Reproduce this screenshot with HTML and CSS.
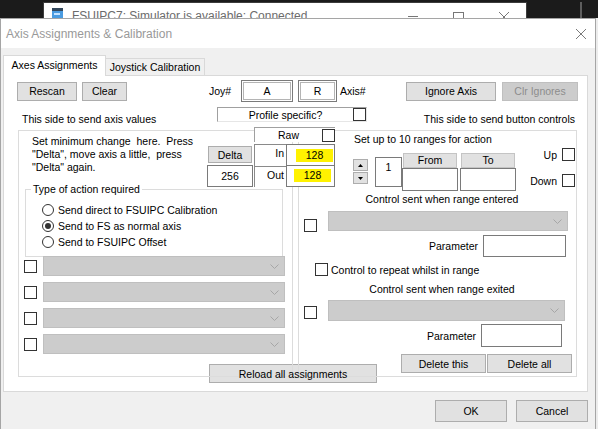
FILE: index.html
```html
<!DOCTYPE html>
<html lang="en">
<head>
    <meta charset="UTF-8">
    <title>Axis Assignments &amp; Calibration</title>
    <link rel="stylesheet" href="styles.css">
</head>
<body>
    <!-- window behind the dialog -->
    <div class="desktop">
        <div class="bg-window">
            <svg class="app-icon" width="11" height="10" viewBox="0 0 11 10">
                <rect x="0" y="0" width="11" height="3" fill="#33475b"/>
                <rect x="0" y="3" width="11" height="7" fill="#4a9be0"/>
                <rect x="2" y="5" width="6" height="2" fill="#c4e2ff"/>
            </svg>
            <span class="bg-title">FSUIPC7: Simulator is available: Connected</span>
            <svg class="bg-controls" width="110" height="14" viewBox="0 0 110 14">
                <line x1="5" y1="8.5" x2="15" y2="8.5" stroke="#777"/>
                <rect x="50.5" y="4.5" width="10" height="10" fill="none" stroke="#777"/>
                <path d="M96 4 L106 14 M106 4 L96 14" stroke="#777"/>
            </svg>
        </div>
        <div class="desktop-edge"></div>
    </div>

    <div class="dialog">
        <div class="titlebar">
            <span>Axis Assignments &amp; Calibration</span>
            <svg class="close" width="10" height="10" viewBox="0 0 10 10">
                <path d="M0 0 L10 10 M10 0 L0 10" stroke="#7a7a7a"/>
            </svg>
        </div>

        <div class="tabs">
            <div class="tab active">Axes Assignments</div>
            <div class="tab">Joystick Calibration</div>
        </div>

        <div class="panel">
            <div class="toolbar">
                <button class="btn rescan">Rescan</button>
                <button class="btn clear">Clear</button>
                <span class="joy-label">Joy#</span>
                <div class="id-box joy-box">A</div>
                <div class="id-box axis-box">R</div>
                <span class="axis-label">Axis#</span>
                <button class="btn ignore">Ignore Axis</button>
                <button class="btn disabled clr">Clr Ignores</button>
            </div>

            <div class="sides">
                <div class="side-note left">This side to send axis values</div>
                <div class="profile"><span>Profile specific?</span><span class="check"></span></div>
                <div class="side-note right">This side to send button controls</div>
            </div>

            <div class="groups">
                <!-- axis side -->
                <div class="group axis-side">
                    <div class="hint">Set minimum change  here.  Press
"Delta", move axis a little,  press
"Delta" again.</div>
                    <div class="action">
                        <div class="action-caption">Type of action required</div>
                        <div class="radios">
                            <div class="radio"><span class="dot"></span>Send direct to FSUIPC Calibration</div>
                            <div class="radio"><span class="dot on"></span>Send to FS as normal axis</div>
                            <div class="radio"><span class="dot"></span>Send to FSUIPC Offset</div>
                        </div>
                    </div>
                    <div class="assign-rows">
                        <div class="assign"><span class="check"></span><div class="combo"><svg width="9" height="5" viewBox="0 0 9 5"><path d="M0.5 0.5 L4.5 4.5 L8.5 0.5" fill="none" stroke="#a6a6a6"/></svg></div></div>
                        <div class="assign"><span class="check"></span><div class="combo"><svg width="9" height="5" viewBox="0 0 9 5"><path d="M0.5 0.5 L4.5 4.5 L8.5 0.5" fill="none" stroke="#a6a6a6"/></svg></div></div>
                        <div class="assign"><span class="check"></span><div class="combo"><svg width="9" height="5" viewBox="0 0 9 5"><path d="M0.5 0.5 L4.5 4.5 L8.5 0.5" fill="none" stroke="#a6a6a6"/></svg></div></div>
                        <div class="assign"><span class="check"></span><div class="combo"><svg width="9" height="5" viewBox="0 0 9 5"><path d="M0.5 0.5 L4.5 4.5 L8.5 0.5" fill="none" stroke="#a6a6a6"/></svg></div></div>
                    </div>
                </div>

                <!-- button side -->
                <div class="group button-side">
                    <div class="ranges-title">Set up to 10 ranges for action</div>
                    <div class="range-row">
                        <div class="spinner">
                            <div class="spin"><svg width="5" height="3" viewBox="0 0 5 3"><polygon points="0,3 2.5,0 5,3" fill="#000"/></svg></div>
                            <div class="spin"><svg width="5" height="3" viewBox="0 0 5 3"><polygon points="0,0 2.5,3 5,0" fill="#000"/></svg></div>
                        </div>
                        <div class="field range-index">1</div>
                        <div class="bound">
                            <div class="bound-head">From</div>
                            <div class="field bound-input"></div>
                        </div>
                        <div class="bound to">
                            <div class="bound-head">To</div>
                            <div class="field bound-input"></div>
                        </div>
                        <div class="direction">
                            <div class="dir">Up<span class="check"></span></div>
                            <div class="dir">Down<span class="check"></span></div>
                        </div>
                    </div>

                    <div class="range-caption">Control sent when range entered</div>
                    <div class="control-row">
                        <span class="check"></span>
                        <div class="combo"><svg width="9" height="5" viewBox="0 0 9 5"><path d="M0.5 0.5 L4.5 4.5 L8.5 0.5" fill="none" stroke="#a6a6a6"/></svg></div>
                    </div>
                    <div class="param">Parameter<div class="field"></div></div>
                    <div class="repeat"><span class="check"></span>Control to repeat whilst in range</div>

                    <div class="range-caption exit">Control sent when range exited</div>
                    <div class="control-row exit">
                        <span class="check"></span>
                        <div class="combo"><svg width="9" height="5" viewBox="0 0 9 5"><path d="M0.5 0.5 L4.5 4.5 L8.5 0.5" fill="none" stroke="#a6a6a6"/></svg></div>
                    </div>
                    <div class="param exit">Parameter<div class="field"></div></div>

                    <div class="delete-row">
                        <button class="btn">Delete this</button>
                        <button class="btn">Delete all</button>
                    </div>
                </div>
            </div>

            <button class="btn reload">Reload all assignments</button>

            <!-- delta / raw readings, sits across both group borders -->
            <div class="delta-cluster">
                <div class="delta-col">
                    <button class="btn delta">Delta</button>
                    <div class="field delta-value">256</div>
                </div>
                <div class="raw-col">
                    <div class="raw"><span>Raw</span><span class="check"></span></div>
                    <div class="readings">
                        <div class="io">In</div>
                        <div class="val"><span class="marker first">128</span></div>
                        <div class="io">Out</div>
                        <div class="val second"><span class="marker">128</span></div>
                    </div>
                </div>
            </div>
        </div>

        <div class="footer">
            <button class="btn">OK</button>
            <button class="btn">Cancel</button>
        </div>
    </div>
</body>
</html>
```

FILE: styles.css
```css
* {
    box-sizing: border-box;
}
body {
    margin: 0;
    width: 598px;
    height: 429px;
    overflow: hidden;
    background: #ececec;
    font-family: "Liberation Sans", Arial, sans-serif;
    font-size: 10.5px;
    color: #000;
}

/* background window */
.desktop {
    display: flex;
    height: 18px;
    padding-top: 2px;
    overflow: hidden;
    background: #1b1b1b;
}
.bg-window {
    display: flex;
    align-items: flex-start;
    flex: none;
    width: 484px;
    height: 30px;
    margin-left: 43px;
    padding: 5px 0 0 8px;
    background: #fff;
    border: 1px solid #3c3c3c;
}
.app-icon {
    flex: none;
}
.bg-title {
    margin: 1px 0 0 9px;
    font-size: 12px;
    line-height: 14px;
    color: #6b6b6b;
}
.bg-controls {
    margin-left: auto;
    margin-right: 13px;
}
.desktop-edge {
    width: 2px;
    margin-left: 53px;
    background: #5e5e5e;
}

/* dialog frame */
.dialog {
    width: 596px;
    height: 411px;
    background: #f0f0f0;
    border: 1px solid #a5a5a5;
    border-bottom: none;
}
.titlebar {
    display: flex;
    align-items: center;
    height: 29px;
    padding: 0 9px 0 5px;
    background: #fff;
    font-size: 12px;
    color: #999;
}
.titlebar .close {
    margin-left: auto;
}
.tabs {
    display: flex;
    align-items: flex-end;
    height: 20px;
    margin-top: 7px;
    padding-left: 2px;
}
.tab {
    width: 99px;
    height: 17px;
    line-height: 16px;
    text-align: center;
    background: #f0f0f0;
    border: 1px solid #d9d9d9;
    border-left: none;
    border-bottom: none;
}
.tab.active {
    position: relative;
    z-index: 2;
    width: 103px;
    height: 21px;
    margin-bottom: -1px;
    line-height: 19px;
    background: #fff;
    border-left: 1px solid #d9d9d9;
}
.panel {
    position: relative;
    width: 585px;
    height: 317px;
    margin-left: 2px;
    background: #fff;
    border: 1px solid #d9d9d9;
}

/* common controls */
.btn {
    display: block;
    flex: none;
    height: 19px;
    padding: 0;
    font: inherit;
    color: #000;
    background: #e1e1e1;
    border: 1px solid #adadad;
}
.btn.disabled {
    color: #8c8c8c;
    background: #cccccc;
    border-color: #bfbfbf;
}
.check {
    flex: none;
    width: 13px;
    height: 13px;
    background: #fff;
    border: 1px solid #333;
}
.field {
    flex: none;
    background: #fff;
    border: 1px solid #7a7a7a;
}
.combo {
    display: flex;
    align-items: center;
    flex: none;
    height: 20px;
    background: #cccccc;
    border: 1px solid #bfbfbf;
}
.combo svg {
    margin-left: auto;
    margin-right: 5px;
}

/* top row */
.toolbar {
    display: flex;
    align-items: center;
    height: 22px;
    margin-top: 4px;
    padding-left: 13px;
}
.rescan {
    width: 60px;
}
.clear {
    width: 45px;
    margin-left: 5px;
}
.joy-label {
    width: 32px;
    margin-left: 82px;
}
.id-box {
    flex: none;
    height: 22px;
    line-height: 20px;
    text-align: center;
    background: #fff;
    border: 1px solid #7a7a7a;
    box-shadow: inset 0 0 0 1px #fff, inset 0 0 0 2px #b4b4b4;
}
.joy-box {
    width: 52px;
}
.axis-box {
    width: 39px;
    margin-left: 5px;
}
.axis-label {
    width: 66px;
    margin-left: 3px;
}
.ignore {
    width: 90px;
}
.clr {
    width: 76px;
    margin-left: 6px;
}

.sides {
    display: flex;
    align-items: flex-start;
    height: 23px;
    margin-top: 5px;
}
.side-note {
    margin-top: 6px;
    line-height: 13px;
}
.side-note.left {
    width: 195px;
    margin-left: 18px;
}
.side-note.right {
    width: 208px;
    text-align: right;
}
.profile {
    display: flex;
    align-items: center;
    width: 150px;
    height: 15px;
    border-top: 1px solid #a0a0a0;
    border-left: 1px solid #a0a0a0;
    border-right: 1px solid #e6e6e6;
    border-bottom: 1px solid #e6e6e6;
}
.profile span:first-child {
    flex: 1;
    text-align: center;
}

.groups {
    display: flex;
    gap: 5px;
    height: 247px;
    margin-left: 14px;
}
.group {
    flex: none;
    border: 1px solid #dcdcdc;
}
.axis-side {
    width: 275px;
}
.button-side {
    width: 279px;
}
.reload {
    width: 168px;
    margin: -13px 0 0 205px;
}

/* axis side */
.hint {
    padding: 4px 0 0 13px;
    line-height: 13px;
    white-space: pre;
}
.action {
    width: 258px;
    height: 68px;
    margin: 15px 0 0 6px;
    border: 1px solid #dcdcdc;
}
.action-caption {
    width: max-content;
    margin: -7px 0 0 5px;
    padding: 0 2px;
    line-height: 13px;
    background: #fff;
}
.radios {
    margin-top: 6px;
}
.radio {
    display: flex;
    align-items: center;
    height: 16px;
    padding-left: 16px;
}
.dot {
    display: flex;
    align-items: center;
    justify-content: center;
    width: 12px;
    height: 12px;
    margin-right: 4px;
    background: #fff;
    border: 1px solid #333;
    border-radius: 50%;
}
.dot.on::after {
    content: "";
    width: 6px;
    height: 6px;
    border-radius: 50%;
    background: #333;
}
.assign-rows {
    margin-top: -1px;
}
.assign {
    display: flex;
    align-items: center;
    height: 20px;
    margin-bottom: 6px;
    padding-left: 5px;
}
.assign .combo {
    width: 242px;
    margin-left: 6px;
}

/* delta cluster */
.delta-cluster {
    position: absolute;
    left: 203px;
    top: 51px;
    display: flex;
    gap: 1px;
}
.delta-col {
    width: 46px;
    padding-top: 19px;
}
.delta {
    width: 44px;
    height: 17px;
    margin-left: 1px;
}
.delta-value {
    width: 46px;
    height: 22px;
    margin-top: 2px;
    line-height: 20px;
    text-align: center;
}
.raw-col {
    width: 81px;
}
.raw {
    display: flex;
    align-items: center;
    height: 15px;
    background: #fff;
    border-top: 1px solid #a0a0a0;
    border-left: 1px solid #a0a0a0;
}
.raw span:first-child {
    flex: 1;
    text-align: center;
}
.readings {
    display: grid;
    grid-template-columns: 32px 49px;
    grid-template-rows: 22px 21px;
    margin-top: 2px;
    background: #fff;
}
.io {
    padding: 2px 2px 0 0;
    line-height: 13px;
    text-align: right;
    border-left: 1px solid #8a8a8a;
    border-top: 1px solid #8a8a8a;
}
.val {
    border: 1px solid #7a7a7a;
}
.val.second {
    border-top: none;
}
.marker {
    display: block;
    width: 37px;
    height: 13px;
    margin: 3px 0 0 7px;
    line-height: 13px;
    text-align: center;
    background: #fff200;
}
.marker.first {
    margin: 4px 0 0 9px;
}

/* button side */
.ranges-title {
    padding: 2px 0 0 55px;
    line-height: 13px;
}
.range-row {
    display: flex;
    align-items: flex-start;
    height: 43px;
    margin-top: 2px;
}
.spinner {
    display: flex;
    flex-direction: column;
    gap: 1px;
    width: 15px;
    margin: 11px 0 0 54px;
}
.spin {
    display: flex;
    align-items: center;
    justify-content: center;
    height: 12px;
    background: #e1e1e1;
    border: 1px solid #adadad;
}
.range-index {
    width: 27px;
    height: 30px;
    margin: 9px 0 0 7px;
    padding-top: 3px;
    line-height: 13px;
    text-align: center;
}
.bound {
    width: 56px;
}
.bound.to {
    margin-left: 2px;
}
.bound-head {
    height: 15px;
    margin: 5px 1px 0;
    line-height: 13px;
    text-align: center;
    background: #e1e1e1;
    border: 1px solid #c4c4c4;
}
.bound-input {
    height: 23px;
}
.direction {
    margin-left: auto;
    margin-right: 1px;
}
.dir {
    display: flex;
    align-items: center;
    justify-content: flex-end;
    height: 13px;
}
.dir + .dir {
    margin-top: 13px;
}
.dir .check {
    margin-left: 5px;
}
.range-caption {
    margin-top: 2px;
    padding-left: 9px;
    line-height: 13px;
    text-align: center;
}
.range-caption.exit {
    margin-top: 7px;
}
.control-row {
    display: flex;
    align-items: flex-start;
    margin-top: 5px;
}
.control-row .check {
    margin: 8px 0 0 5px;
}
.control-row .combo {
    width: 240px;
    margin-left: 11px;
}
.control-row.exit {
    margin-top: 4px;
}
.control-row.exit .check {
    margin-top: 6px;
}
.control-row.exit .combo {
    width: 237px;
    height: 21px;
}
.param {
    display: flex;
    align-items: center;
    justify-content: flex-end;
    margin-top: 3px;
    padding-right: 10px;
}
.param .field {
    width: 83px;
    height: 22px;
    margin-left: 5px;
}
.param.exit {
    padding-right: 14px;
}
.param.exit .field {
    width: 81px;
    height: 23px;
}
.repeat {
    display: flex;
    align-items: center;
    height: 13px;
    margin-top: 6px;
    padding-left: 16px;
}
.repeat .check {
    margin-right: 3px;
}
.delete-row {
    display: flex;
    justify-content: flex-end;
    gap: 1px;
    margin-top: 7px;
    padding-right: 4px;
}
.delete-row .btn {
    width: 85px;
}

.footer {
    display: flex;
    justify-content: flex-end;
    gap: 9px;
    margin-top: 8px;
    padding-right: 7px;
}
.footer .btn {
    width: 72px;
    height: 22px;
}
```
